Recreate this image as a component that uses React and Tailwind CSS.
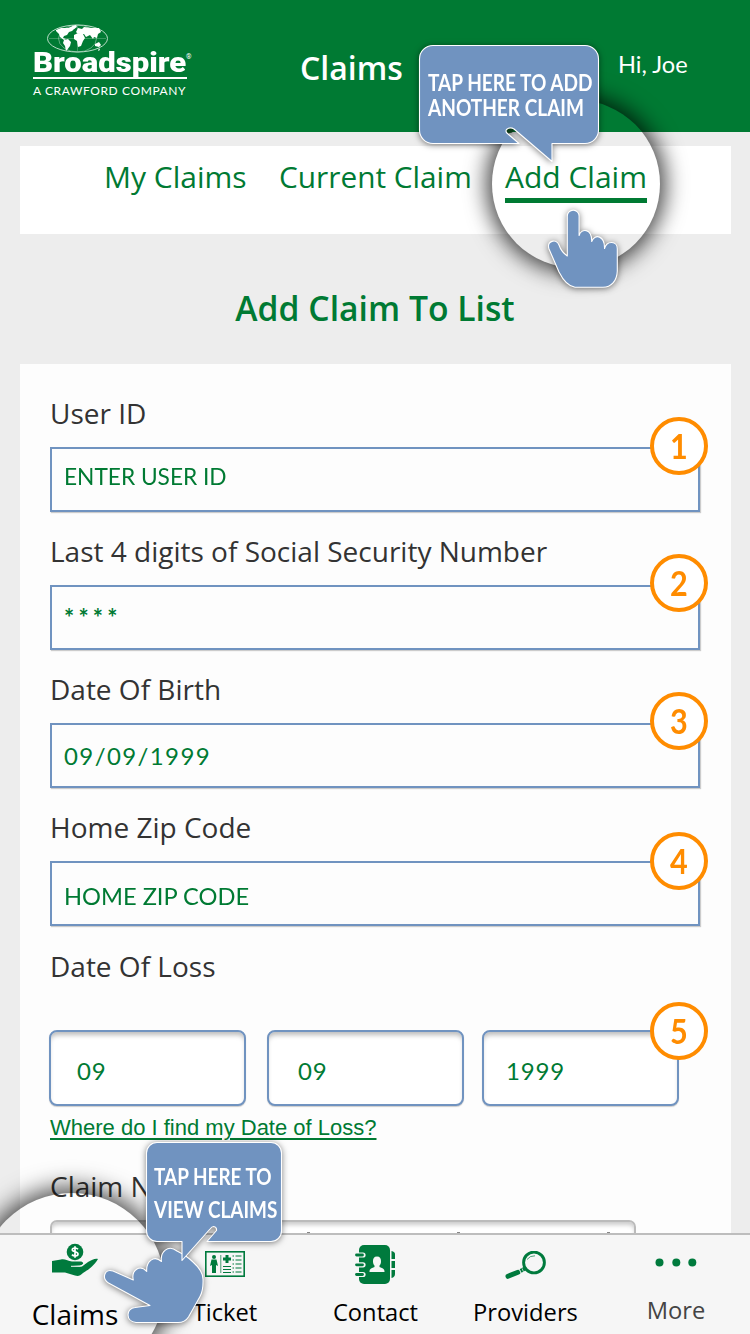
const fields = [
  { n: 1, label: "User ID", value: "ENTER USER ID", text: "scale-x-[0.945] pt-[15px]", badge: "-top-[32px]" },
  { n: 2, label: "Last 4 digits of Social Security Number", value: "****", text: "tracking-[4.2px] pt-[19px] font-bold", badge: "-top-[33px]" },
  { n: 3, label: "Date Of Birth", value: "09/09/1999", text: "tracking-[1.4px] pt-[19px]", badge: "-top-[33px]" },
  { n: 4, label: "Home Zip Code", value: "HOME ZIP CODE", text: "scale-x-[0.985] pt-[21px]", badge: "-top-[31px]" },
];

function Badge({ n, className }) {
  return (
    <div className={`absolute flex h-[58px] w-[58px] items-center justify-center rounded-full border-4 border-[#ff8c00] bg-white font-['Lato',sans-serif] text-[34px] leading-none font-bold text-[#ff8c00] ${className}`}>
      <span className="scale-x-[0.9]">{n}</span>
    </div>
  );
}

function Logo() {
  return (
    <div className="w-[165px] pt-[24px] font-['Roboto',sans-serif] text-white">
      <svg className="ml-[14px] block h-[29px] w-[62px]" viewBox="0 0 62 29" fill="none">
        <g stroke="#b9dcc7" strokeWidth="1">
          <ellipse cx="30.5" cy="14.5" rx="30" ry="13.5" />
          <ellipse cx="30.5" cy="14.5" rx="19" ry="13.5" strokeOpacity=".5" />
          <path d="M30.500 1v27M2 14.500h57" strokeOpacity=".3" />
        </g>
        <g fill="#fff">
          <path d="M9 6l5-2 7 0 5-2 2 2-3 3-3 1-2 3-3 1-1 2 3 1-2 1-4-3-1-3-3-3z" />
          <path d="M17 16l4-1 3 3-1 4-3 4-1 1-1-5-2-3z" />
          <path d="M27 11l4-2 5 1 2 4-2 3-2 5-3 1-1-6-3-2z" />
          <path d="M29 8l2-4 4 1 2-2 8 1 7 0 2 4-3 2-1 4-3-1-1 2-3-4-4 2-2-3-4 0-3-1z" />
          <path d="M48 20l4-2 2 3-2 2-4-1zM52 24l1 2-2 1z" />
          <path d="M25 2l4-1 1 2-3 2z" />
        </g>
      </svg>
      <div className="-mt-[5px] flex h-[29px] items-center">
        <span className="origin-left scale-x-[1.11] text-[28px] leading-[29px] font-black">Broadspire</span>
        <span className="ml-[15px] -mt-[11px] text-[7px]">®</span>
      </div>
      <div className="h-[2px] w-[154px] bg-white" />
      <div className="mt-[4px] font-['Lato',sans-serif] text-[12px] leading-[16px] tracking-[0.6px] whitespace-nowrap">A CRAWFORD COMPANY</div>
    </div>
  );
}

function HandMoneyIcon() {
  return (
    <svg className="h-[34px] w-[48px]" viewBox="0 0 48 34">
      <circle cx="24" cy="9" r="8.300" fill="#007a3d" />
      <path d="M27 6.200C25.500 4.500 21.300 4.500 21.300 6.800C21.300 9.500 27 8 27 11C27 13.500 22.500 13.500 21 11.600M24 3.300V14.700" stroke="#fff" strokeWidth="1.700" fill="none" />
      <path d="M1 18L10 16.500C14 15.500 17 18.500 21 18.500H30C33 19 33 22 29 22.500L22 23L31 23.500L37 19C41 17 44 15 47 16C43 23 37 27 32 30C29 33 27 33.500 24 32.500L14 29.500H1z" fill="#007a3d" />
      <path d="M20 23.300H29Q32 22.800 32.500 21" stroke="#f6f6f6" strokeWidth="1" fill="none" />
    </svg>
  );
}

function TicketIcon() {
  return (
    <svg className="h-[26px] w-[40px]" viewBox="0 0 40 26" fill="#007a3d">
      <rect x=".8" y=".8" width="38.400" height="24.400" fill="none" stroke="#007a3d" strokeWidth="1.600" />
      <circle cx="9" cy="6" r="2" />
      <path d="M6.500 8.500h5l1.500 6.500-2-1v8H7v-8l-2 1z" />
      <path d="M15.800 4v18" stroke="#007a3d" strokeWidth=".7" />
      <path d="M20.500 4h3v2.500H26v3h-2.500V12h-3V9.500H18v-3h2.500z" />
      <path d="M18 15.500h8M18 18.500h8M18 21.500h8" stroke="#007a3d" strokeWidth="1" />
      <path d="M27.500 5h1.500m1.500 0h6M27.500 9h1.500m1.500 0h6M27.500 13h1.500m1.500 0h6M27.500 17h1.500m1.500 0h6M27.500 21h1.500m1.500 0h6" stroke="#007a3d" strokeWidth="1.100" />
    </svg>
  );
}

function ContactIcon() {
  return (
    <svg className="h-[39px] w-[41px]" viewBox="0 0 41 39" fill="#007a3d">
      <rect x="4" y="0" width="31" height="39" rx="5" />
      <path d="M36.500 6q3.500 1 3.500 3v5h-3.500zM36.500 16H40v7h-3.500zM36.500 25H40v4q0 3-3.500 4z" />
      {[10, 19.800, 29.500].map((y) => (
        <g key={y}>
          <path d={`M3 ${y}H8`} stroke="#f6f6f6" strokeWidth="5.200" strokeLinecap="round" />
          <path d={`M1.500 ${y}H7.500`} stroke="#007a3d" strokeWidth="2.800" strokeLinecap="round" />
        </g>
      ))}
      <path d="M22 11.500c3 0 4.300 2 4 5.500-.2 2-.8 2.800-1.500 3.500v1.500l3 1.300c1.600.8 2 1.700 2 3.700h-15c0-2 .4-2.900 2-3.700l3-1.300v-1.500c-.7-.7-1.300-1.500-1.500-3.500-.3-3.500 1-5.500 4-5.500z" fill="#f6f6f6" />
    </svg>
  );
}

function SearchIcon() {
  return (
    <svg className="h-[28px] w-[41px]" viewBox="0 0 41 28" fill="none" stroke="#007a3d">
      <circle cx="29" cy="11.500" r="10.400" strokeWidth="2.900" />
      <path d="M22 8.500Q25 4.500 30 4.800" strokeWidth=".7" />
      <path d="M20 17.500L15.500 19.900" strokeWidth="4" />
      <path d="M13 21.300L3 25.300" strokeWidth="5" strokeLinecap="round" />
      <path d="M14.500 18.500l1.500 3.600M17 17.300l1.500 3.500" stroke="#f6f6f6" strokeWidth=".7" />
    </svg>
  );
}

function MoreIcon() {
  return (
    <svg className="h-[9px] w-[42px]" viewBox="0 0 42 9" fill="#007a3d">
      <circle cx="4.500" cy="4.500" r="4" /><circle cx="21.300" cy="4.500" r="4" /><circle cx="37.300" cy="4.500" r="4" />
    </svg>
  );
}

const nav = [
  { label: "Claims", Icon: HandMoneyIcon, text: "pt-[61px] text-[28px] text-black", icon: "top-[8px]" },
  { label: "Ticket", Icon: TicketIcon, text: "pt-[59px] text-[23.7px] text-black", icon: "top-[16px]" },
  { label: "Contact", Icon: ContactIcon, text: "pt-[59px] pl-px text-[23.7px] text-black", icon: "top-[10px]" },
  { label: "Providers", Icon: SearchIcon, text: "pt-[59px] pl-px text-[23.7px] text-black", icon: "top-[16px]" },
  { label: "More", Icon: MoreIcon, text: "pt-[57px] pl-[2px] text-[23.7px] text-[#444]", icon: "top-[23px] pl-[2px]" },
];

export default function App() {
  return (
    <div className="relative flex h-[1334px] w-[750px] flex-col overflow-hidden bg-[#ededed] font-['Open_Sans',sans-serif] text-[#333]">
      <header className="flex h-[132px] shrink-0 bg-[#007a33] pl-[33px] text-white">
        <Logo />
        <h1 className="w-[221px] pt-[48px] pl-[102px] text-[32px] leading-[40px] font-semibold">Claims</h1>
        <div className="pt-[49px] pl-[199px] font-['Lato',sans-serif] text-[23.6px] leading-[30px] whitespace-nowrap">Hi, Joe</div>
      </header>

      <nav className="mt-[14px] ml-[20px] flex h-[88px] w-[711px] shrink-0 bg-white pt-px pl-[84px] text-[30px] leading-[40px] text-[#007a33]">
        <a className="w-[175px] pt-[10px]">My Claims</a>
        <a className="w-[226px] pt-[10px] text-[29.8px]">Current Claim</a>
        <a className="mt-[10px] h-[46px] w-[142px] border-b-[5px] border-[#007a33]">Add Claim</a>
      </nav>

      <h2 className="flex h-[130px] shrink-0 items-center justify-center pt-[18px] text-[33.7px] font-semibold text-[#007a33]">Add Claim To List</h2>

      <main className="ml-[20px] w-[711px] grow bg-[#fdfdfd] px-[30px] pt-[34px]">
        {fields.map((f) => (
          <section key={f.n} className="h-[138px]">
            <label className="block h-[32px] text-[28px] leading-[31px]">{f.label}</label>
            <div className="relative mt-[17px] h-[65px] w-[650px] border-2 border-[#7093c0] bg-[#fdfdfd] pl-[12px] shadow-[1px_1px_1px_#ccc]">
              <span className={`inline-block origin-left font-['Lato',sans-serif] text-[24px] leading-[24px] text-[#007a33] ${f.text}`}>{f.value}</span>
              <Badge n={f.n} className={`-right-[10px] ${f.badge}`} />
            </div>
          </section>
        ))}
        <label className="block h-[32px] text-[28px] leading-[32px]">Date Of Loss</label>
        <div className="mt-[48px] -ml-px flex font-['Lato',sans-serif] text-[24px] text-[#007a33]">
          <div className="mr-[21px] flex h-[76px] w-[197px] items-center rounded-[8px] border-2 border-[#7093c0] bg-white pt-[6px] pl-[26px] tracking-[0.8px] shadow-[inset_0_5px_5px_-2px_#bbb,0_1px_1px_#ccc]">09</div>
          <div className="mr-[18px] flex h-[76px] w-[197px] items-center rounded-[8px] border-2 border-[#7093c0] bg-white pt-[6px] pl-[29px] tracking-[0.8px] shadow-[inset_0_5px_5px_-2px_#bbb,0_1px_1px_#ccc]">09</div>
          <div className="relative flex h-[76px] w-[197px] items-center rounded-[8px] border-2 border-[#7093c0] bg-white pt-[6px] pl-[22px] tracking-[0.8px] shadow-[inset_0_5px_5px_-2px_#bbb,0_1px_1px_#ccc]">
            1999
            <Badge n={5} className="-top-[30px] -right-[31px] tracking-normal" />
          </div>
        </div>
        <a className="mt-[9px] block h-[26px] font-['Liberation_Sans',sans-serif] text-[22px] leading-[26px] text-[#007a33] underline decoration-[1.5px] underline-offset-[3px]">Where do I find my Date of Loss?</a>
        <label className="mt-[29px] block h-[32px] text-[28px] leading-[32px]">Claim N</label>
        <div className="mt-[18px] flex h-[30px] w-[586px] rounded-[7px] border-2 border-[#bbb] bg-white pt-[10px] shadow-[inset_0_4px_4px_-1px_#ccc]">
          <i className="ml-[255px] h-[6px] w-[3px] bg-[#888]" />
          <i className="ml-[147px] h-[6px] w-[3px] bg-[#888]" />
          <i className="ml-[147px] h-[6px] w-[3px] bg-[#888]" />
        </div>
      </main>

      <footer className="absolute inset-x-0 bottom-0 grid h-[101px] grid-cols-5 border-t-2 border-[#bdbdbd] bg-[#f6f6f6]">
        {nav.map(({ label, Icon, text, icon }) => (
          <div key={label} className="relative flex justify-center">
            <div className={`absolute ${icon}`}><Icon /></div>
            <span className={`leading-[36px] ${text}`}>{label}</span>
          </div>
        ))}
      </footer>

      <div className="absolute top-[100px] left-[492px] h-[168px] w-[168px] rounded-full shadow-[0_0_22px_5px_rgba(0,0,0,0.75)]" />
      <div className="absolute top-[1193px] left-[-21px] h-[186px] w-[186px] rounded-full shadow-[0_0_24px_5px_rgba(0,0,0,0.75)]" />

      <svg className="absolute top-[30px] left-[400px] h-[280px] w-[240px] drop-shadow-[0_1px_3px_rgba(0,0,0,0.5)]" viewBox="400 30 240 280" fill="#7093c0" stroke="#fff" strokeWidth="1.100" strokeLinejoin="round">
        <ellipse cx="509.500" cy="130.500" rx="3.500" ry="2.500" fill="#0b3a18" stroke="none" />
        <path d="M433 45.500H585a13.500 13.500 0 0 1 13.500 13.500V130a13.500 13.500 0 0 1-13.500 13.500H552V161.500L514 129Q510 126.500 506.500 129.500Q505 132 508 134L519 143.500H433a13.500 13.500 0 0 1-13.500-13.500V59a13.500 13.500 0 0 1 13.500-13.500z" />
        <path d="M567.300 256V216a5.900 5.900 0 0 1 11.800 0V235.500C581 228 592 228 591.700 241.500C595 233 605 236 604.500 248.500C607 240 617.500 241 617.300 249V271C617 281 611 287.300 603 287.300H575C567 286 562 278 559 272L549 249C546.500 241 556 238 559 245C561 251 563 253 567.300 256z" />
      </svg>
      <div className="absolute top-[70px] left-[428px] w-[200px] font-['Lato',sans-serif] text-[22px] leading-[25px] font-bold whitespace-nowrap text-white">
        <div className="origin-left scale-x-[0.865]">TAP HERE TO ADD</div>
        <div className="origin-left scale-x-[0.865]">ANOTHER CLAIM</div>
      </div>

      <svg className="absolute top-[1134px] left-[90px] h-[200px] w-[210px] drop-shadow-[0_1px_3px_rgba(0,0,0,0.5)]" viewBox="90 1134 210 200" fill="#7093c0" stroke="#fff" strokeWidth="1.100" strokeLinejoin="round">
        <path d="M108.500 1283C101 1278 105 1268 113 1271L133.300 1280C131 1270 140 1264 146.700 1271.500C146 1261 154 1255 161.500 1261.500C160 1252 168 1244 177 1251Q187 1256 193 1262Q203 1271 203 1279Q203.500 1290 200 1296.500L188.500 1317Q185 1322.500 178 1322.500H136C125 1321 126 1308 135 1307.500L150 1305.500z" />
        <path d="M157 1142.500H271a10.500 10.500 0 0 1 10.500 10.500V1231a10.500 10.500 0 0 1-10.500 10.500H207L216.500 1230.500Q217 1227 213.500 1226.500Q212 1226.500 210 1229L182 1260.500V1241.500H157a10.500 10.500 0 0 1-10.500-10.500V1153a10.500 10.500 0 0 1 10.500-10.500z" />
      </svg>
      <div className="absolute top-[1160px] left-[154px] w-[150px] font-['Lato',sans-serif] text-[22px] leading-[33px] font-bold whitespace-nowrap text-white">
        <div className="origin-left scale-x-[0.86]">TAP HERE TO</div>
        <div className="origin-left scale-x-[0.86]">VIEW CLAIMS</div>
      </div>
    </div>
  );
}
